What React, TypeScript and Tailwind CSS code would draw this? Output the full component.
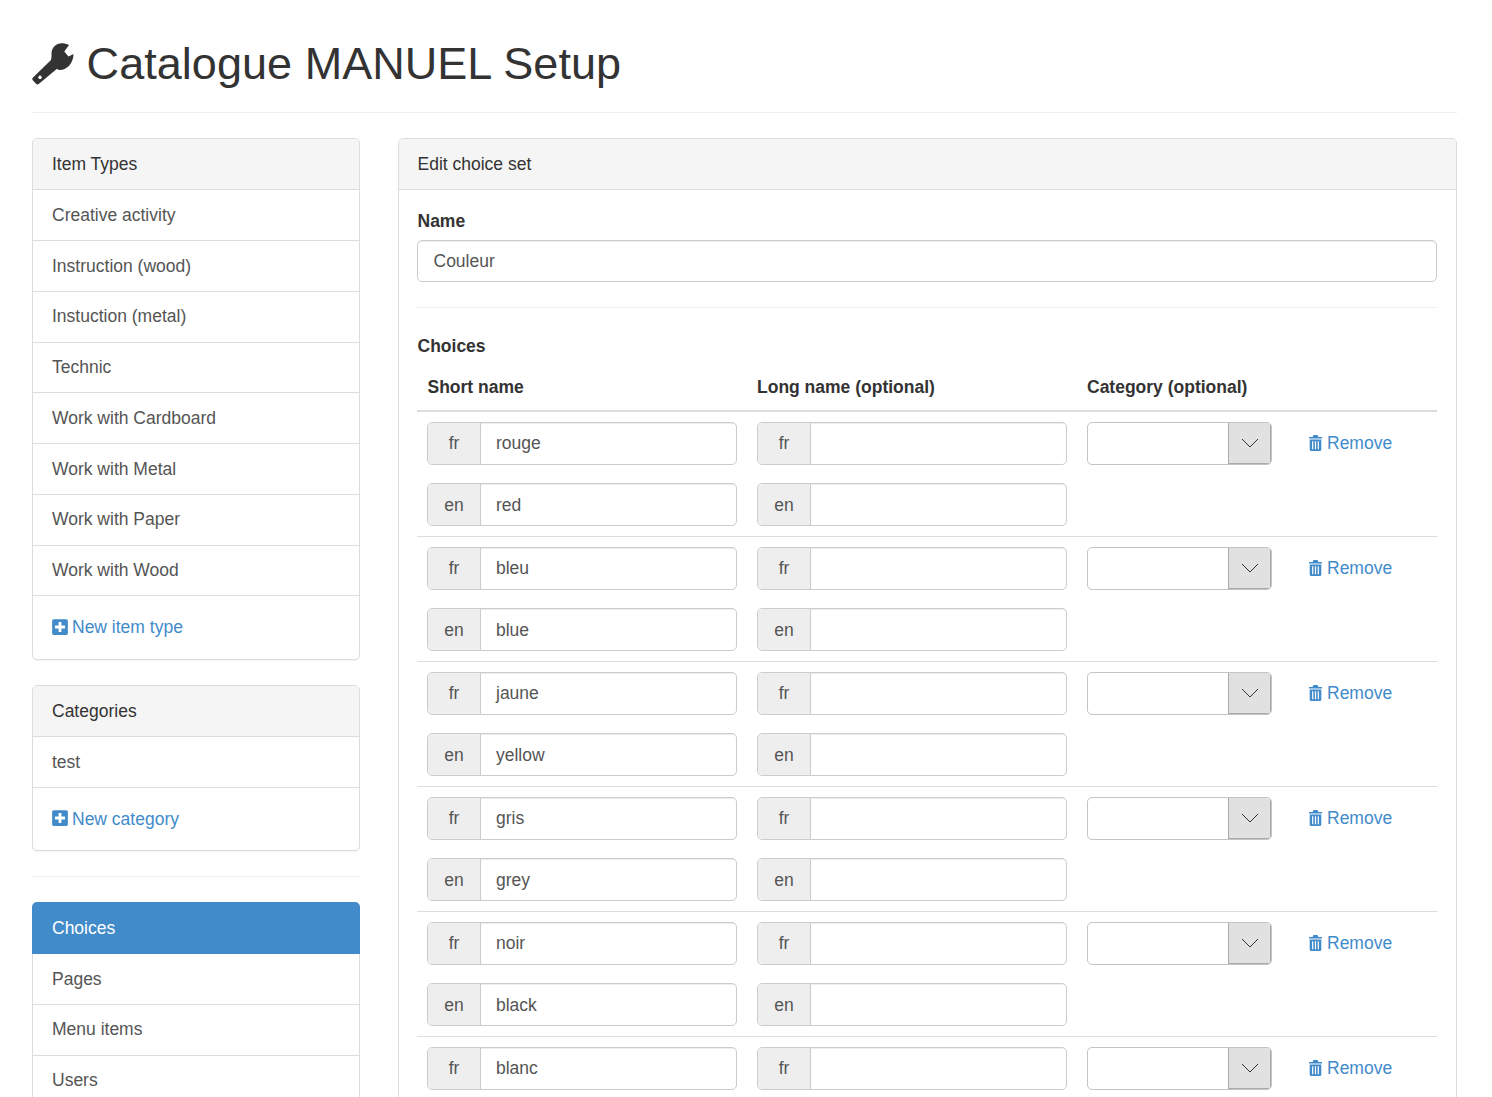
import React from "react";
import { FaPlusSquare } from "react-icons/fa";

function Wrench() {
  return (
    <svg width="43" height="43" viewBox="0 0 43 43" className="mr-[11.6px] shrink-0" fill="#333">
      <path
        fillRule="evenodd"
        d="M29.7 .3C24 .3 19.5 5 19.5 10.5C19.5 12.5 19.6 15 19 17L1 34.5Q-.5 36 1 37.5L4 40.8Q5.3 42 7 40.8L24.7 26C26 26.5 27 27 28 27C35 27 41.5 20 41.5 11L36.5 13.5L32.3 8.5L37 2C35 .8 32 .3 29.7 .3ZM8 32.6a1.7 1.7 0 1 0 .01 0Z"
      />
    </svg>
  );
}

function Trash() {
  return (
    <svg width="15" height="16" viewBox="0 0 14 16" className="mr-[4px] mb-[2px] shrink-0" fill="#428bca">
      <path
        fillRule="evenodd"
        d="M5 0H9L10 2H13.5V3.6H.5V2H4ZM1.2 4.4H12.8V14.5A1.5 1.5 0 0 1 11.3 16H2.7A1.5 1.5 0 0 1 1.2 14.5ZM3.6 6.2V14.2H4.8V6.2ZM6.4 6.2V14.2H7.6V6.2ZM9.2 6.2V14.2H10.4V6.2Z"
      />
    </svg>
  );
}

function SideItem({ children }: { children: React.ReactNode }) {
  return (
    <div className="h-[50.75px] border-t border-[#ddd] px-[19px] flex items-center text-[#555]">
      {children}
    </div>
  );
}

function NewLink({ label, tall }: { label: string; tall?: boolean }) {
  return (
    <div className={`${tall ? "h-[64px]" : "h-[63px]"} border-t border-[#ddd] px-[19px] flex items-center text-[#428bca]`}>
      <FaPlusSquare className="w-[16px] h-[18px] mr-[4px] mb-[2px]" />
      <span>{label}</span>
    </div>
  );
}

function Panel({ title, items, link, tall }: { title: string; items: string[]; link: string; tall?: boolean }) {
  return (
    <div className="border border-[#ddd] rounded-[5px] overflow-hidden bg-white shadow-[0_1px_1px_rgba(0,0,0,0.05)]">
      <div className="h-[50.4px] bg-[#f5f5f5] px-[19px] flex items-center text-[#333]">{title}</div>
      {items.map((t) => (
        <SideItem key={t}>{t}</SideItem>
      ))}
      <NewLink label={link} tall={tall} />
    </div>
  );
}

function Group({ lang, value, low }: { lang: string; value?: string; low?: boolean }) {
  return (
    <div className="flex h-[43px] w-[310px] border border-[#ccc] rounded-[5px] overflow-hidden bg-white">
      <div className={`w-[53px] shrink-0 bg-[#eee] border-r border-[#ccc] flex items-center justify-center text-[#555] ${low ? "pt-[2px]" : ""}`}>{lang}</div>
      <div className={`flex-1 pl-[15px] flex items-center text-[#555] shadow-[inset_0_1px_1px_rgba(0,0,0,0.075)] ${low ? "pt-[2px]" : ""}`}>{value}</div>
    </div>
  );
}

function Choice({ fr, en }: { fr: string; en?: string }) {
  return (
    <div className="border-b border-[#ddd] h-[125px] pt-[10px] pl-[10px]">
      <div className="flex items-start h-[43px]">
        <Group lang="fr" value={fr} />
        <div className="w-[20px]" />
        <Group lang="fr" />
        <div className="w-[20px]" />
        <div className="flex h-[43px] w-[185px] border border-[#c4c4c4] rounded-[5px] overflow-hidden bg-white">
          <div className="flex-1" />
          <div className="w-[43px] bg-[#e1e1e1] border-l border-r border-b border-[#aaa] flex items-center justify-center">
            <svg width="18" height="10" viewBox="0 0 18 10" fill="none" stroke="#333" strokeWidth="1">
              <path d="M1 1l8 8 8-8" />
            </svg>
          </div>
        </div>
        <div className="ml-[36px] h-[43px] flex items-center text-[#428bca]">
          <Trash />
          <span>Remove</span>
        </div>
      </div>
      {en && (
        <div className="flex items-start mt-[18px]">
          <Group lang="en" value={en} low />
          <div className="w-[20px]" />
          <Group lang="en" low />
        </div>
      )}
    </div>
  );
}

export default function App() {
  const rows: [string, string?][] = [
    ["rouge", "red"],
    ["bleu", "blue"],
    ["jaune", "yellow"],
    ["gris", "grey"],
    ["noir", "black"],
    ["blanc"],
  ];
  return (
    <div className="h-[1097px] overflow-hidden bg-white pl-[32px] pr-[35px] font-['Liberation_Sans',Arial,sans-serif] text-[17.5px] leading-[25px] text-[#333]">
      <div className="pt-[24px] h-[113px] border-b border-[#eee] flex items-start">
        <div className="flex items-center h-[80px] text-[45px] leading-[50px]">
          <Wrench />
          <span className="tracking-[0.04px]">Catalogue MANUEL Setup</span>
        </div>
      </div>
      <div className="flex gap-[38px] mt-[25px]">
        <div className="w-[328px] shrink-0 flex flex-col">
          <Panel
            title="Item Types"
            items={["Creative activity", "Instruction (wood)", "Instuction (metal)", "Technic", "Work with Cardboard", "Work with Metal", "Work with Paper", "Work with Wood"]}
            link="New item type"
            tall
          />
          <div className="mt-[24.5px]">
            <Panel title="Categories" items={["test"]} link="New category" />
          </div>
          <div className="border-t border-[#eee] mt-[25px]" />
          <div className="mt-[25px] rounded-[5px] overflow-hidden">
            <div className="h-[52px] bg-[#428bca] px-[20px] flex items-center text-white">Choices</div>
            <div className="border-x border-[#ddd]">
              <div className="h-[50px] px-[19px] flex items-center text-[#555]">Pages</div>
              {["Menu items", "Users"].map((t) => (
                <SideItem key={t}>{t}</SideItem>
              ))}
            </div>
          </div>
        </div>
        <div className="flex-1 min-w-0 border border-[#ddd] rounded-[5px] h-[1100px] overflow-hidden">
          <div className="h-[51px] bg-[#f5f5f5] border-b border-[#ddd] px-[18.5px] flex items-center text-[#333]">Edit choice set</div>
          <div className="pl-[18px] pr-[19px]">
            <div className="font-bold pt-[19px] h-[50px] pl-[0.5px]">Name</div>
            <div className="h-[42px] border border-[#ccc] rounded-[5px] pl-[15.5px] flex items-center text-[#555] shadow-[inset_0_1px_1px_rgba(0,0,0,0.075)]">Couleur</div>
            <div className="border-t border-[#eee] mt-[25px]" />
            <div className="font-bold mt-[26px] pl-[0.5px]">Choices</div>
            <div className="flex font-bold mt-[16px] h-[35px] pl-[10.5px]">
              <div className="w-[329.5px]">Short name</div>
              <div className="w-[330px]">Long name (optional)</div>
              <div>Category (optional)</div>
            </div>
            <div className="border-t-2 border-[#ddd]">
              {rows.map(([a, b]) => (
                <Choice key={a} fr={a} en={b} />
              ))}
            </div>
          </div>
        </div>
      </div>
    </div>
  );
}
